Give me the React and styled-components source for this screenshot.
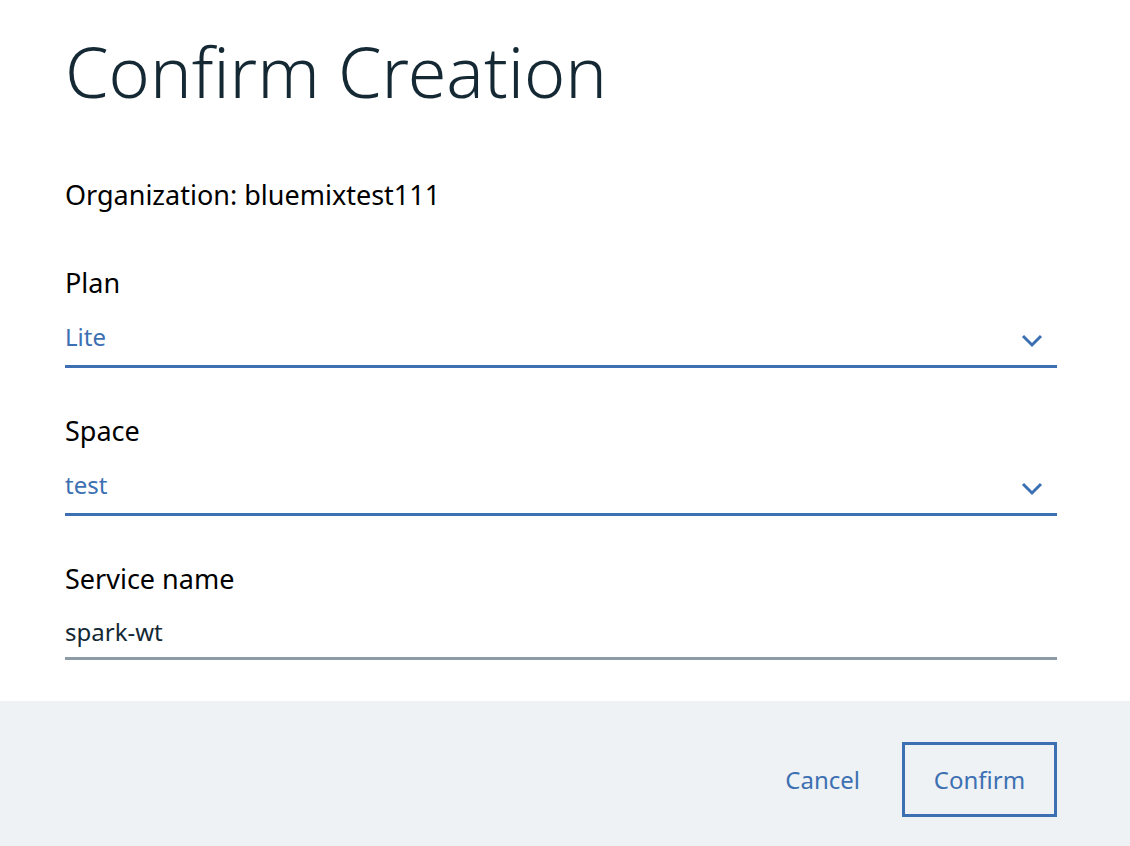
import styled, { createGlobalStyle } from 'styled-components'

const Global = createGlobalStyle`
  html, body { margin: 0; padding: 0; background: #fff; }
  body { font-family: "Noto Sans", "Open Sans", sans-serif; }
  * { box-sizing: border-box; }
`

const Modal = styled.div`
  width: 1130px;
  min-height: 846px;
  display: flex;
  flex-direction: column;
  background: #fff;
`

const Body = styled.div`
  padding: 31px 73px 41px 65px;
`

const Title = styled.h1`
  margin: 0;
  font-size: 70px;
  line-height: 80px;
  font-weight: 300;
  color: #152935;
  letter-spacing: 0;
`

const OrgLine = styled.div`
  margin-top: 64px;
  font-size: 27px;
  line-height: 40px;
  color: #000;
`

const Field = styled.div`
  margin-top: ${p => p.$gap}px;
`

const Label = styled.div`
  font-size: 27px;
  line-height: 40px;
  color: #000;
`

const Select = styled.div`
  display: flex;
  align-items: flex-start;
  justify-content: space-between;
  height: 65px;
  padding-top: 16px;
  border-bottom: 3px solid #3d70b2;
  color: #3d70b2;
  font-size: 24px;
  line-height: 36px;
`

const Chevron = styled.svg`
  margin: 15px 14px 0 0;
`

const Input = styled.div`
  height: 61px;
  padding-top: 15px;
  border-bottom: 3px solid #8c9ba5;
  color: #152935;
  font-size: 24px;
  line-height: 36px;
`

const Footer = styled.div`
  flex: 1;
  background: #eff2f5;
  display: flex;
  align-items: flex-start;
  justify-content: flex-end;
  padding: 41px 73px 0 0;
`

const TextButton = styled.button`
  border: none;
  background: none;
  padding: 0;
  margin: 20px 42px 0 0;
  font-family: inherit;
  font-size: 24px;
  line-height: 36px;
  color: #3d70b2;
`

const OutlineButton = styled.button`
  width: 155px;
  height: 75px;
  border: 3px solid #3d70b2;
  background: transparent;
  font-family: inherit;
  font-size: 24px;
  color: #3d70b2;
  padding: 0;
`

function ChevronDown() {
  return (
    <Chevron width="22" height="14" viewBox="0 0 22 14">
      <polyline points="2,2 11,11 20,2" fill="none" stroke="#3d70b2" strokeWidth="3" />
    </Chevron>
  )
}

export default function App() {
  return (
    <Modal>
      <Global />
      <Body>
        <Title>Confirm Creation</Title>
        <OrgLine>Organization: bluemixtest111</OrgLine>

        <Field $gap={48}>
          <Label>Plan</Label>
          <Select>
            <span>Lite</span>
            <ChevronDown />
          </Select>
        </Field>

        <Field $gap={43}>
          <Label>Space</Label>
          <Select>
            <span>test</span>
            <ChevronDown />
          </Select>
        </Field>

        <Field $gap={43}>
          <Label>Service name</Label>
          <Input>spark-wt</Input>
        </Field>
      </Body>
      <Footer>
        <TextButton>Cancel</TextButton>
        <OutlineButton>Confirm</OutlineButton>
      </Footer>
    </Modal>
  )
}
